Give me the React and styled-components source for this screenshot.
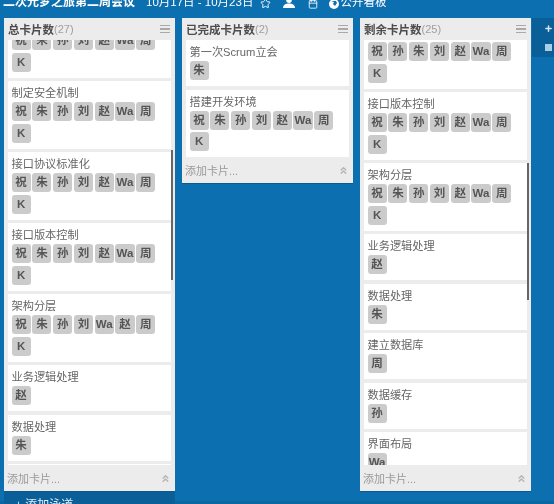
import React from "react";
import styled, { createGlobalStyle } from "styled-components";
import { Star, Calendar, ChevronsUp, Plus } from "lucide-react";

const FONT = `"Liberation Sans", "Noto Sans CJK SC", sans-serif`;

const ALL = ["祝", "朱", "孙", "刘", "赵", "Wa", "周", "K"];

const columns = [
  {
    title: "总卡片数",
    count: 27,
    height: 473,
    offset: 30,
    thumb: { top: 132, height: 130 },
    cards: [
      { title: "制定代码规范", tags: ALL },
      { title: "制定安全机制", tags: ALL },
      { title: "接口协议标准化", tags: ALL },
      { title: "接口版本控制", tags: ALL },
      { title: "架构分层", tags: ["祝", "朱", "孙", "刘", "Wa", "赵", "周", "K"] },
      { title: "业务逻辑处理", tags: ["赵"] },
      { title: "数据处理", tags: ["朱"] },
      { title: "建立数据库", tags: ["周"] },
    ],
  },
  {
    title: "已完成卡片数",
    count: 2,
    cards: [
      { title: "第一次Scrum立会", tags: ["朱"] },
      { title: "搭建开发环境", tags: ALL },
    ],
  },
  {
    title: "剩余卡片数",
    count: 25,
    height: 473,
    offset: 19,
    thumb: { top: 145, height: 137 },
    cards: [
      { title: "接口协议标准化", tags: ["祝", "孙", "朱", "刘", "赵", "Wa", "周", "K"] },
      { title: "接口版本控制", tags: ALL },
      { title: "架构分层", tags: ALL },
      { title: "业务逻辑处理", tags: ["赵"] },
      { title: "数据处理", tags: ["朱"] },
      { title: "建立数据库", tags: ["周"] },
      { title: "数据缓存", tags: ["孙"] },
      { title: "界面布局", tags: ["Wa"] },
    ],
  },
];

const App = () => (
  <Page>
    <GlobalStyle />
    <TopBar>
      <BoardTitle>二次元梦之旅第二周会议</BoardTitle>
      <DateRange>10月17日 - 10月23日</DateRange>
      <BarIcon $left={7}>
        <Star size={11} strokeWidth={2} />
      </BarIcon>
      <BarIcon $left={12}>
        <svg width="12" height="12" viewBox="0 0 13 13">
          <circle cx="6.5" cy="3.5" r="3" fill="#fff" />
          <path d="M0 12c0-3.500 3-5 6.500-5s6.500 1.500 6.500 5z" fill="#fff" />
        </svg>
      </BarIcon>
      <BarIcon $left={13}>
        <Calendar size={10} strokeWidth={2} />
      </BarIcon>
      <BarIcon $left={11}>
        <svg width="10" height="10" viewBox="0 0 10 10">
          <circle cx="5" cy="5" r="5" fill="#fff" />
          <path d="M2 2l3 1-1 2 2 2 2-3-1-2z" fill="#0c6fb0" />
        </svg>
      </BarIcon>
      <Visibility>公开看板</Visibility>
    </TopBar>
    <Board>
      {columns.map((col) => (
        <Column key={col.title} $height={col.height}>
          <ColumnHeader>
            <ColumnTitle>{col.title}</ColumnTitle>
            <ColumnCount>({col.count})</ColumnCount>
            <MenuLines>
              <i />
              <i />
              <i />
            </MenuLines>
          </ColumnHeader>
          <CardArea>
            <CardList $offset={col.offset}>
              {col.cards.map((card) => (
                <Card key={card.title}>
                  <CardTitle>{card.title}</CardTitle>
                  <TagRow>
                    {card.tags.map((tag) => (
                      <Tag key={tag}>{tag}</Tag>
                    ))}
                  </TagRow>
                </Card>
              ))}
            </CardList>
          </CardArea>
          {col.thumb && <ScrollThumb style={col.thumb} />}
          <ColumnFooter>
            <AddCard>添加卡片...</AddCard>
            <ChevronsUp size={11} strokeWidth={3} color="#b4b4b4" />
          </ColumnFooter>
        </Column>
      ))}
      <SideRail>
        <Plus size={9} strokeWidth={4} color="#d7e8f4" />
        <RailSquare />
      </SideRail>
    </Board>
    <BottomBand>
      <SwimRow>
        <SwimLabel>+ 添加泳道</SwimLabel>
      </SwimRow>
    </BottomBand>
  </Page>
);

const GlobalStyle = createGlobalStyle`
  html, body {
    margin: 0;
    padding: 0;
    background: #0c6fb0;
  }
`;

const Page = styled.div`
  width: 554px;
  height: 504px;
  overflow: hidden;
  background: #0c6fb0;
  font-family: ${FONT};
  display: flex;
  flex-direction: column;
  filter: blur(0.35px);
`;

const TopBar = styled.div`
  height: 18px;
  flex: none;
  overflow: hidden;
  display: flex;
  align-items: flex-end;
  padding: 0 0 9px 3px;
  box-sizing: border-box;
  color: #fff;
  white-space: nowrap;
`;

const BoardTitle = styled.div`
  font-size: 12px;
  line-height: 14px;
  font-weight: 700;
`;

const DateRange = styled.div`
  font-size: 11.5px;
  line-height: 14px;
  margin-left: 11px;
`;

const BarIcon = styled.span`
  display: flex;
  margin-left: ${(p) => p.$left}px;
`;

const Visibility = styled.div`
  font-size: 11.5px;
  line-height: 14px;
  margin-left: 1px;
`;

const Board = styled.div`
  display: flex;
  align-items: flex-start;
  gap: 7.5px;
  padding-left: 4px;
  height: 473px;
  flex: none;
`;

const Column = styled.div`
  position: relative;
  flex: none;
  width: 170.5px;
  height: ${(p) => (p.$height ? `${p.$height}px` : "auto")};
  display: flex;
  flex-direction: column;
  background: #ececec;
  box-shadow: 0 1px 0 #0a5a90;
`;

const ColumnHeader = styled.div`
  height: 22px;
  flex: none;
  display: flex;
  align-items: center;
  padding: 0 5px 0 4px;
  font-size: 11.5px;
`;

const ColumnTitle = styled.span`
  font-weight: 700;
  color: #4d4d4d;
`;

const ColumnCount = styled.span`
  color: #a0a0a0;
  font-size: 11px;
`;

const MenuLines = styled.span`
  margin-left: auto;
  display: flex;
  flex-direction: column;
  gap: 2px;
  & i {
    display: block;
    width: 10px;
    height: 1.5px;
    background: #a9a9a9;
  }
`;

const CardArea = styled.div`
  flex: 1;
  min-height: 0;
  overflow: hidden;
`;

const CardList = styled.div`
  display: flex;
  flex-direction: column;
  gap: 3.5px;
  margin: ${(p) => (p.$offset ? `-${p.$offset}px` : "0")} 3.5px 0 4px;
`;

const Card = styled.div`
  background: #fff;
  padding: 4px 4px 6px 3.5px;
  flex: none;
`;

const CardTitle = styled.div`
  font-size: 11.2px;
  line-height: 16px;
  color: #666;
  white-space: nowrap;
`;

const TagRow = styled.div`
  display: flex;
  flex-wrap: wrap;
  gap: 2.5px 1.6px;
  margin-top: 1px;
`;

const Tag = styled.span`
  width: 19.2px;
  height: 19px;
  border-radius: 3px;
  background: #cbcbcb;
  color: #555;
  font-size: 11.5px;
  font-weight: 700;
  line-height: 19px;
  text-align: center;
  white-space: nowrap;
`;

const ScrollThumb = styled.div`
  position: absolute;
  right: 1.5px;
  width: 2px;
  background: #666;
`;

const ColumnFooter = styled.div`
  height: 26px;
  flex: none;
  display: flex;
  align-items: center;
  justify-content: space-between;
  padding: 0 4px 0 3px;
`;

const AddCard = styled.span`
  font-size: 11px;
  color: #9a9a9a;
`;

const SideRail = styled.div`
  flex: 1;
  margin-left: -6px;
  height: 39px;
  background: #0a5f98;
  display: flex;
  flex-direction: column;
  align-items: flex-end;
  gap: 11px;
  padding: 6px 1px 0 0;
  box-sizing: border-box;
`;

const RailSquare = styled.span`
  width: 7px;
  height: 7px;
  margin-right: 1px;
  background: #a9cfe8;
`;

const BottomBand = styled.div`
  height: 13px;
  flex: none;
  box-shadow: inset 0 -3px 0 #0b679f;
`;

const SwimRow = styled.div`
  margin-left: 4px;
  width: 170.5px;
  height: 13px;
  background: #0a5f98;
  overflow: hidden;
`;

const SwimLabel = styled.div`
  padding: 7px 0 0 11px;
  font-size: 12px;
  line-height: 14px;
  color: #e4eff7;
`;

export default App;
